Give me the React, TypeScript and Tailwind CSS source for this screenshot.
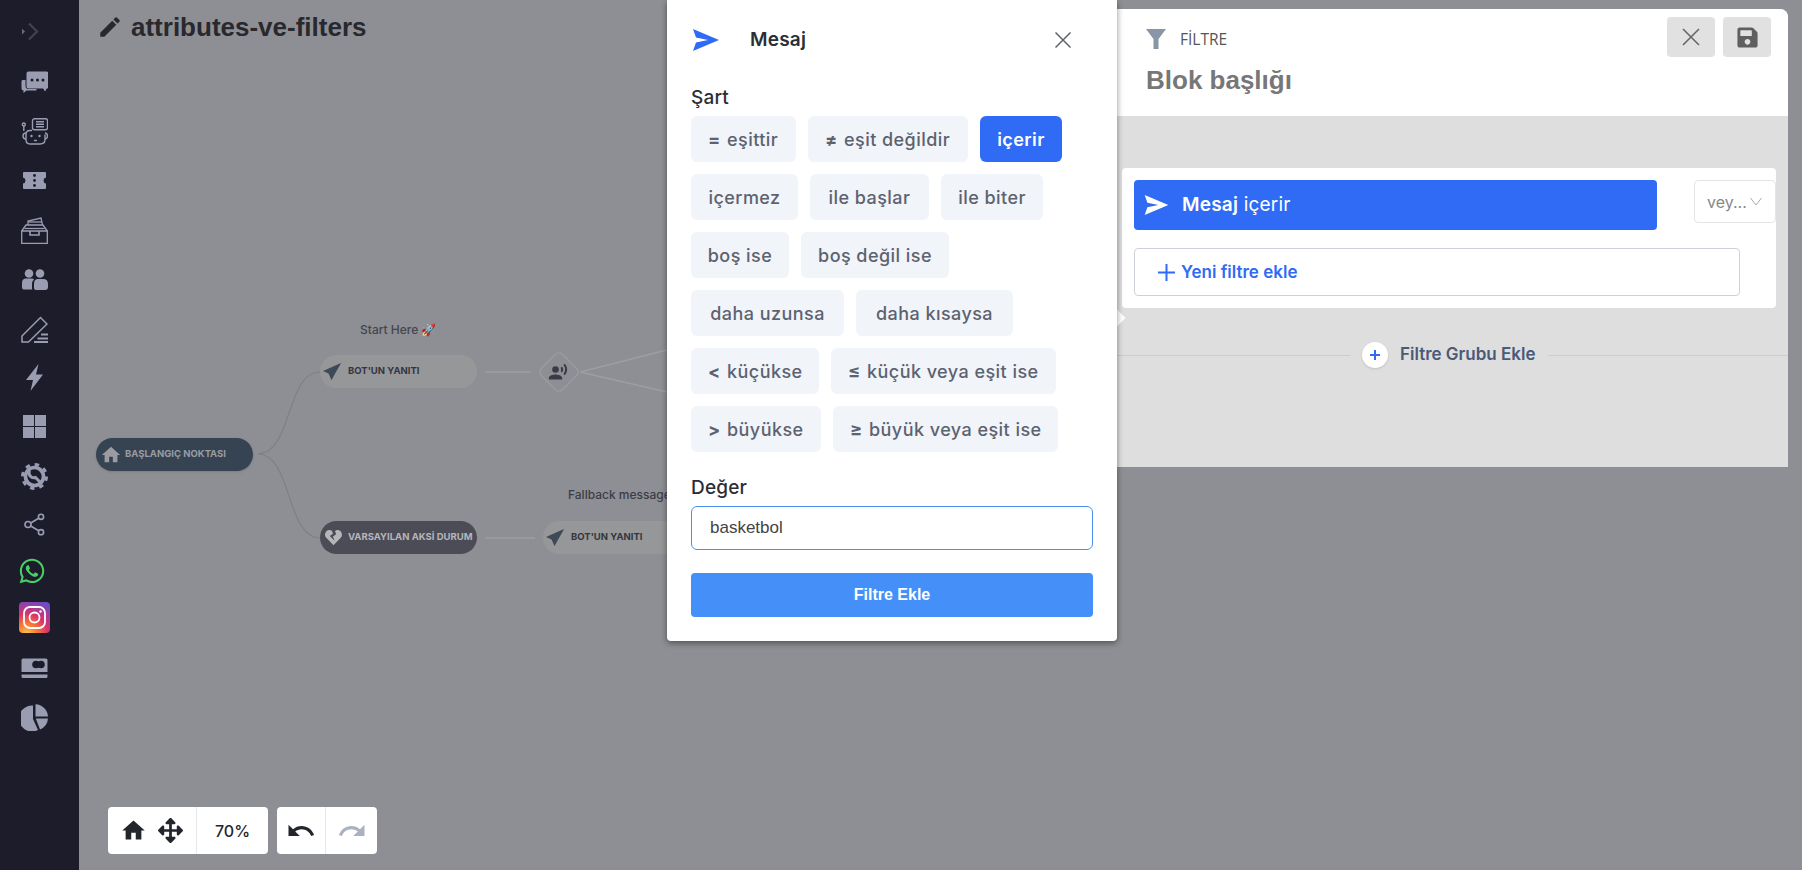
import React from "react";
import { FaArrowsAlt, FaHeartBroken, FaWhatsapp, FaSave } from "react-icons/fa";
import { MdHome, MdEdit, MdUndo, MdRedo, MdRecordVoiceOver } from "react-icons/md";

const SIDE = "#9a9db2";

function ChevronsIcon() {
  return (
    <svg width="27" height="27" viewBox="0 0 27 27">
      <path d="M1 10.5 L4 13.5 L1 16.5Z" fill="#6a6b7c" />
      <path d="M8 5.5 L16 13.5 L8 21.5" fill="none" stroke="#40414f" strokeWidth="2.4" />
    </svg>
  );
}
function ChatIcon() {
  return (
    <svg width="27" height="27" viewBox="0 0 27 27" fill={SIDE}>
      <path d="M1.5 12 h3 v6 q0 3 3 3 h8 v1.5 h-10 l-3 2.5 v-2.5 q-2 0 -2 -2 v-7 q0 -1.5 1 -1.5z" />
      <rect x="5.5" y="3.5" width="22" height="17" rx="2" />
      <path d="M22 20 h4 l-2 3.5z" />
      <circle cx="11" cy="12" r="1.5" fill="#1c1c2b" />
      <circle cx="16.500" cy="12" r="1.5" fill="#1c1c2b" />
      <circle cx="22" cy="12" r="1.5" fill="#1c1c2b" />
    </svg>
  );
}
function BotIcon() {
  return (
    <svg width="27" height="27" viewBox="0 0 27 27" fill="none" stroke={SIDE} strokeWidth="1.4">
      <rect x="11.500" y="0.800" width="15" height="11" rx="2" />
      <path d="M15 3.800h8M15 6.300h8M15 8.800h8" />
      <circle cx="2.800" cy="6.500" r="1.500" />
      <path d="M2.800 8v5" />
      <path d="M11 12.500 H9 q-4 0 -4 4 v5 q0 4.500 4 4.500 h10 q5 0 5 -4.500 v-5" />
      <path d="M5 15 q-3 0 -3 3 t3 3 M24 15 q2.500 0 2.500 3 t-2.500 3" />
      <circle cx="10.500" cy="18" r="1.200" fill={SIDE} stroke="none" />
      <circle cx="18.500" cy="18" r="1.200" fill={SIDE} stroke="none" />
      <path d="M13 22.500h3" />
    </svg>
  );
}
function TicketIcon() {
  return (
    <svg width="27" height="27" viewBox="0 0 27 27">
      <path
        d="M3 5 h21 a1 1 0 0 1 1 1 v4.500 q-2.500 0.500 -2.500 3 t2.500 3 v4.500 a1 1 0 0 1 -1 1 h-21 a1 1 0 0 1 -1 -1 v-4.500 q2.500 -0.500 2.500 -3 t-2.500 -3 v-4.500 a1 1 0 0 1 1 -1z"
        fill={SIDE}
      />
      <circle cx="13.500" cy="8.500" r="1.400" fill="#1c1c2b" />
      <circle cx="13.500" cy="13.500" r="1.400" fill="#1c1c2b" />
      <circle cx="13.500" cy="18.500" r="1.400" fill="#1c1c2b" />
    </svg>
  );
}
function InboxIcon() {
  return (
    <svg width="27" height="27" viewBox="0 0 27 27" fill="none" stroke={SIDE} strokeWidth="1.300">
      <path d="M0.700 14 h25.600 v12.300 h-25.600z" />
      <path d="M0.700 14 L5 8 h17 l4.300 6" />
      <path d="M7 8 V4 L20 1 l1.500 7" />
      <path d="M7 5 h14" />
      <path d="M3.500 11.500 h20" />
      <path d="M9 14 v4 h9 v-4" strokeWidth="1.600" />
    </svg>
  );
}
function UsersIcon() {
  return (
    <svg width="27" height="27" viewBox="0 0 27 27" fill={SIDE}>
      <circle cx="8" cy="7.500" r="4.300" />
      <circle cx="19" cy="7.500" r="4.300" />
      <path d="M1 17 q0 -4.500 4 -4.500 h6 q1.500 0 2 1 q-2 1.500 -2 4 v5.500 l0.500 0.500 h-8.500 q-2 0 -2 -2z" />
      <path d="M13 18 q0 -5 4 -5 h5 q5 0 5 5 v3 q0 3 -3 3 h-9 q-2 0 -2 -2z" />
    </svg>
  );
}
function NotesIcon() {
  return (
    <svg width="27" height="27" viewBox="0 0 27 27" fill="none" stroke={SIDE} strokeWidth="1.500">
      <path d="M1 20 L19.500 1.500 L26 8 L7.500 26 H1z" />
      <path d="M13 26h14M16.500 22.500h10.500M20 18.500h7" strokeWidth="1.800" />
    </svg>
  );
}
function BoltIcon() {
  return (
    <svg width="27" height="27" viewBox="0 0 27 27" fill={SIDE}>
      <path d="M17.500 0 L5 16 H12 L9.500 27 L22 10.500 H15z" />
    </svg>
  );
}
function GridIcon() {
  return (
    <svg width="27" height="27" viewBox="0 0 27 27" fill={SIDE}>
      <rect x="2" y="2" width="11" height="11" />
      <rect x="14" y="2" width="11" height="11" />
      <rect x="2" y="14" width="11" height="11" />
      <rect x="14" y="14" width="11" height="11" />
    </svg>
  );
}
function GearIcon() {
  return (
    <svg width="27" height="27" viewBox="0 0 27 27" fill="none">
      <circle cx="13.500" cy="13.500" r="9" stroke={SIDE} strokeWidth="3.600" />
      <circle cx="13.500" cy="13.500" r="12" stroke={SIDE} strokeWidth="3" strokeDasharray="4.400 5" />
      <path d="M8.500 7.500 a5 5 0 0 0 6 7 l5.500 5.500" stroke={SIDE} strokeWidth="3" />
    </svg>
  );
}
function ShareIcon() {
  return (
    <svg width="27" height="27" viewBox="0 0 27 27" fill="none" stroke={SIDE} strokeWidth="1.600">
      <circle cx="7" cy="13.500" r="3" />
      <circle cx="20" cy="5.800" r="2.600" />
      <circle cx="20" cy="21.200" r="2.600" />
      <path d="M9.700 12 L17.700 7.200 M9.700 15 L17.700 19.800" />
    </svg>
  );
}
function InstagramIcon() {
  return (
    <svg width="31" height="31" viewBox="0 0 31 31">
      <defs>
        <radialGradient id="ig" cx="0.250" cy="1.050" r="1.150">
          <stop offset="0" stopColor="#fdc94f" />
          <stop offset="0.300" stopColor="#f77a35" />
          <stop offset="0.600" stopColor="#d6326f" />
          <stop offset="1" stopColor="#6d4bc5" />
        </radialGradient>
      </defs>
      <rect width="31" height="31" rx="4" fill="url(#ig)" />
      <rect x="5" y="5" width="21" height="21" rx="6" fill="none" stroke="#fff" strokeWidth="1.800" />
      <circle cx="15.500" cy="15.500" r="5" fill="none" stroke="#fff" strokeWidth="1.800" />
      <circle cx="21.500" cy="9.500" r="1.200" fill="#fff" />
    </svg>
  );
}
function CardIcon() {
  return (
    <svg width="27" height="27" viewBox="0 0 27 27" fill={SIDE}>
      <path d="M2 3.500 h23 a1.500 1.500 0 0 1 1.500 1.500 v12 h-26 v-12 a1.500 1.500 0 0 1 1.500 -1.500z" />
      <path d="M0.500 19.500 h26 v2 a1.500 1.500 0 0 1 -1.500 1.500 h-23 a1.500 1.500 0 0 1 -1.500 -1.500z" />
      <circle cx="15" cy="9.500" r="3.800" fill="#1c1c2b" />
      <circle cx="20" cy="9.500" r="3.800" fill="#1c1c2b" />
    </svg>
  );
}
function PieIcon() {
  return (
    <svg width="27" height="27" viewBox="0 0 27 27" fill={SIDE}>
      <path d="M12 1.500 V15 L17 26 A13 13 0 1 1 12 1.500z" />
      <path d="M14.500 0.300 A13 13 0 0 1 27 12.500 H14.500z" />
      <path d="M14.800 14.500 H27 A13 13 0 0 1 19 25.500z" />
    </svg>
  );
}

const sideRows = [
  { h: "h-[56px] pt-[6px]", icon: <ChevronsIcon /> },
  { h: "h-[50px]", icon: <ChatIcon /> },
  { h: "h-[50px]", icon: <BotIcon /> },
  { h: "h-[49px]", icon: <TicketIcon /> },
  { h: "h-[50px]", icon: <InboxIcon /> },
  { h: "h-[49px]", icon: <UsersIcon /> },
  { h: "h-[50px]", icon: <NotesIcon /> },
  { h: "h-[47px]", icon: <BoltIcon /> },
  { h: "h-[50px]", icon: <GridIcon /> },
  { h: "h-[50px]", icon: <GearIcon /> },
  { h: "h-[46px]", icon: <ShareIcon /> },
  { h: "h-[48px] pr-[5px]", icon: <FaWhatsapp size={28} color="#48d066" /> },
  { h: "h-[44px]", icon: <InstagramIcon /> },
  { h: "h-[58px]", icon: <CardIcon /> },
  { h: "h-[40px]", icon: <PieIcon /> },
];

function Plane({ color = "#3f4a58" }: { color?: string }) {
  return (
    <svg width="18" height="17" viewBox="0 0 18 17">
      <path d="M18 0 L0 8 L5.500 10.500 L8.500 17 L11 12z" fill={color} />
      <path d="M18 0 L6.500 10 L8.500 17z" fill={color} opacity="0.75" />
    </svg>
  );
}

function SendIcon({ w, h, accent }: { w: number; h: number; accent: string }) {
  return (
    <svg width={w} height={h} viewBox="0 0 26 22">
      <path d="M0 0 L26 11 L0 22 L3 13.500 L15 11 L3 8.500z" fill={accent} />
    </svg>
  );
}

type ChipData = { w: string; sym?: string; text: string; active?: boolean };
const chips: ChipData[] = [
  { w: "w-[105px]", sym: "=", text: "eşittir" },
  { w: "w-[160px]", sym: "≠", text: "eşit değildir" },
  { w: "w-[82px]", text: "içerir", active: true },
  { w: "w-[107px]", text: "içermez" },
  { w: "w-[119px]", text: "ile başlar" },
  { w: "w-[102px]", text: "ile biter" },
  { w: "w-[98px]", text: "boş ise" },
  { w: "w-[148px]", text: "boş değil ise" },
  { w: "w-[153px]", text: "daha uzunsa" },
  { w: "w-[157px]", text: "daha kısaysa" },
  { w: "w-[128px]", sym: "<", text: "küçükse" },
  { w: "w-[225px]", sym: "≤", text: "küçük veya eşit ise" },
  { w: "w-[130px]", sym: ">", text: "büyükse" },
  { w: "w-[225px]", sym: "≥", text: "büyük veya eşit ise" },
];

function Chip({ c }: { c: ChipData }) {
  const base =
    "h-[46px] rounded-md flex items-center text-[18px] font-medium tracking-[0.45px] whitespace-nowrap ";
  const tone = c.active ? "bg-[#2f6bf5] text-white font-semibold " : "bg-[#f1f4f8] text-[#5c6270] ";
  return (
    <div className={base + tone + c.w + (c.sym ? " pl-[17px]" : " justify-center")}>
      {c.sym && <span className="w-[19px] font-bold text-[18px]">{c.sym}</span>}
      <span>{c.text}</span>
    </div>
  );
}

export default function App() {
  return (
    <div className="flex h-[870px] w-full overflow-hidden bg-[#8e8f94] font-['Inter',sans-serif]">
      <aside className="w-[79px] shrink-0 bg-[#1c1c2b] flex flex-col pr-[10px]">
        {sideRows.map((r, i) => (
          <div key={i} className={"flex items-center justify-center " + r.h}>
            {r.icon}
          </div>
        ))}
      </aside>

      <main className="relative flex-1">
        <header className="flex items-center pl-[18px] pt-[12px] gap-[8px]">
          <MdEdit size={26} color="#28282e" />
          <h1 className="font-['Liberation_Sans',sans-serif] font-bold text-[26px] leading-[30px] text-[#28282e]">
            attributes-ve-filters
          </h1>
        </header>

        <svg className="absolute left-0 top-0" width="1723" height="870" viewBox="79 0 1723 870" fill="none">
          <path d="M258 454 C292 454 286 372 320 372" stroke="#7f8085" strokeWidth="1.200" />
          <path d="M258 454 C292 454 286 538 320 538" stroke="#7f8085" strokeWidth="1.200" />
          <path d="M485 372 H531" stroke="#9d9ea3" strokeWidth="1.500" />
          <path d="M485 538 H535" stroke="#9d9ea3" strokeWidth="1.500" />
          <path d="M580 372 L667 350 M580 372 L667 392" stroke="#9d9ea3" strokeWidth="1.500" />
          <rect x="544" y="357" width="30" height="30" rx="5" transform="rotate(45 559 372)" stroke="#9d9ea3" strokeWidth="1.200" fill="#8e8f94" />
        </svg>

        <div className="absolute left-[17px] top-[438px] w-[157px] h-[33px] rounded-full bg-[#364352] flex items-center pl-[4px] gap-[3px] shadow-sm">
          <MdHome size={22} color="#9a9ca2" />
          <span className="text-[9.500px] font-bold text-[#9a9ca2] whitespace-nowrap">BAŞLANGIÇ NOKTASI</span>
        </div>
        <div className="absolute left-[281px] top-[321px] text-[12px] font-medium text-[#44454f] whitespace-nowrap">
          Start Here 🚀
        </div>
        <div className="absolute left-[241px] top-[355px] w-[157px] h-[33px] rounded-full bg-[#969799] flex items-center pl-[3px] gap-[7px]">
          <Plane />
          <span className="text-[9.500px] font-bold text-[#34353e] whitespace-nowrap">BOT'UN YANITI</span>
        </div>
        <div className="absolute left-[469px] top-[362px] text-[#3a3b44]">
          <MdRecordVoiceOver size={20} />
        </div>
        <div className="absolute left-[241px] top-[521px] w-[157px] h-[33px] rounded-full bg-[#4c4c57] flex items-center pl-[5px] gap-[6px]">
          <FaHeartBroken size={17} color="#b6b6ba" />
          <span className="text-[9.500px] font-bold text-[#b6b6ba] whitespace-nowrap">VARSAYILAN AKSİ DURUM</span>
        </div>
        <div className="absolute left-[489px] top-[486px] text-[12px] font-medium text-[#3c3d47] whitespace-nowrap">
          Fallback message
        </div>
        <div className="absolute left-[464px] top-[521px] w-[157px] h-[33px] rounded-full bg-[#969799] flex items-center pl-[3px] gap-[7px]">
          <Plane />
          <span className="text-[9.500px] font-bold text-[#34353e] whitespace-nowrap">BOT'UN YANITI</span>
        </div>

        <div className="absolute left-[29px] top-[807px] flex gap-[9px]">
          <div className="h-[47px] w-[160px] bg-white rounded flex items-center">
            <div className="w-[89px] flex items-center pl-[12px] gap-[11px] border-r border-[#e5e7eb] h-full text-[#22252c]">
              <MdHome size={27} />
              <FaArrowsAlt size={25} />
            </div>
            <span className="flex-1 text-center text-[16px] font-medium text-[#22252c]">70%</span>
          </div>
          <div className="h-[47px] w-[100px] bg-white rounded flex items-center">
            <div className="w-[49px] h-full border-r border-[#e5e7eb] flex items-center justify-center text-[#22252c]">
              <MdUndo size={30} />
            </div>
            <div className="flex-1 flex items-center justify-center text-[#a9b1c2]">
              <MdRedo size={30} />
            </div>
          </div>
        </div>

        {/* Filter panel */}
        <section className="absolute left-[1038px] top-[9px] w-[671px] h-[458px] bg-[#dedede] rounded-tr-lg flex flex-col">
          <div className="h-[107px] bg-white rounded-tr-lg flex justify-between pl-[29px] pr-[17px] pt-[8px]">
            <div>
              <div className="flex items-center h-[44px] gap-[14px]">
                <svg width="20" height="20" viewBox="0 0 20 20" className="mt-[-1px]">
                  <path d="M0 0 H20 L12.500 10 V20 H7.500 V10z" fill="#8996a6" />
                </svg>
                <span className="font-['Open_Sans',sans-serif] text-[15.500px] text-[#555] pt-[2px]">FİLTRE</span>
              </div>
              <div className="mt-[4px] font-['Liberation_Sans',sans-serif] font-bold text-[26px] leading-[30px] text-[#777]">
                Blok başlığı
              </div>
            </div>
            <div className="flex gap-[8px]">
              <button className="w-[48px] h-[40px] bg-[#e1e1e1] rounded flex items-center justify-center">
                <svg width="18" height="18" viewBox="0 0 18 18" stroke="#666" strokeWidth="1.600">
                  <path d="M1 1 L17 17 M17 1 L1 17" />
                </svg>
              </button>
              <button className="w-[48px] h-[40px] bg-[#e1e1e1] rounded flex items-center justify-center">
                <FaSave size={23} color="#5f5f5f" />
              </button>
            </div>
          </div>

          <div className="mt-[52px] mx-[5px] h-[140px] bg-white rounded pl-[12px] pt-[12px] w-[654px] flex flex-col">
            <div className="flex items-start justify-between">
              <div className="w-[523px] h-[50px] bg-[#2f6bf5] rounded flex items-center pl-[10px] gap-[13px] text-white text-[19px] tracking-[0.2px]">
                <SendIcon w={25} h={20} accent="#fff" />
                <span>
                  <b className="font-semibold">Mesaj</b> içerir
                </span>
              </div>
              <div className="w-[82px] h-[43px] border border-[#e4e4e4] rounded flex items-center pl-[12px] gap-[3px] text-[#888] text-[16px]">
                <span>vey...</span>
                <svg width="12" height="9" viewBox="0 0 12 9" fill="none" stroke="#aaa" strokeWidth="1">
                  <path d="M0.500 1 L6 8 L11.500 1" />
                </svg>
              </div>
            </div>
            <div className="w-[606px] h-[48px] mt-[18px] border border-[#ccd0d9] rounded flex items-center pl-[23px] gap-[6px] text-[#2f6bf5] text-[17px] font-semibold">
              <svg width="17" height="17" viewBox="0 0 17 17" stroke="#2f6bf5" strokeWidth="2">
                <path d="M8.500 0 V17 M0 8.500 H17" />
              </svg>
              <span className="pt-[2px]">Yeni filtre ekle</span>
            </div>
          </div>

          <div className="mt-[34px] flex items-center h-[26px]">
            <div className="w-[233px] h-px bg-[#cdcdcd]" />
            <div className="w-[26px] h-[26px] ml-[12px] rounded-full bg-white shadow flex items-center justify-center">
              <svg width="10" height="10" viewBox="0 0 10 10" stroke="#2f6bf5" strokeWidth="2">
                <path d="M5 0 V10 M0 5 H10" />
              </svg>
            </div>
            <span className="ml-[12px] text-[17px] font-semibold text-[#4a5a78] whitespace-nowrap">Filtre Grubu Ekle</span>
            <div className="flex-1 h-px bg-[#cdcdcd] ml-[12px]" />
          </div>

          <div className="absolute left-[-6px] top-[303px] w-[12px] h-[12px] rotate-45 bg-white" />
        </section>

        {/* Condition popover */}
        <section className="absolute left-[588px] top-0 w-[450px] h-[641px] bg-white rounded-b shadow-[0_2px_6px_rgba(0,0,0,0.45)] px-[24px] flex flex-col">
          <div className="h-[80px] flex items-center pl-[2px]">
            <SendIcon w={26} h={22} accent="#2f6bf5" />
            <span className="ml-[31px] text-[19px] font-semibold tracking-[0.2px] text-[#2b2e36]">Mesaj</span>
            <svg className="ml-auto mr-[22px]" width="16" height="16" viewBox="0 0 16 16" stroke="#5f6368" strokeWidth="1.500">
              <path d="M0.500 0.500 L15.500 15.500 M15.500 0.500 L0.500 15.500" />
            </svg>
          </div>
          <div className="h-[36px] flex items-center text-[19px] font-medium tracking-[0.2px] text-[#2b2e36]">Şart</div>
          <div className="flex flex-wrap gap-x-[12px] gap-y-[12px] w-[402px]">
            {chips.map((c) => (
              <Chip key={c.text} c={c} />
            ))}
          </div>
          <div className="mt-[18px] h-[36px] flex items-center text-[19px] font-medium tracking-[0.2px] text-[#2b2e36]">Değer</div>
          <div className="h-[44px] border border-[#4a90f0] rounded-md flex items-center pl-[18px] font-['Liberation_Sans',sans-serif] text-[17px] text-[#444]">
            basketbol
          </div>
          <button className="mt-[23px] h-[44px] rounded bg-[#4590f8] text-white font-['Liberation_Sans',sans-serif] font-bold text-[16px]">
            Filtre Ekle
          </button>
        </section>
      </main>
    </div>
  );
}
